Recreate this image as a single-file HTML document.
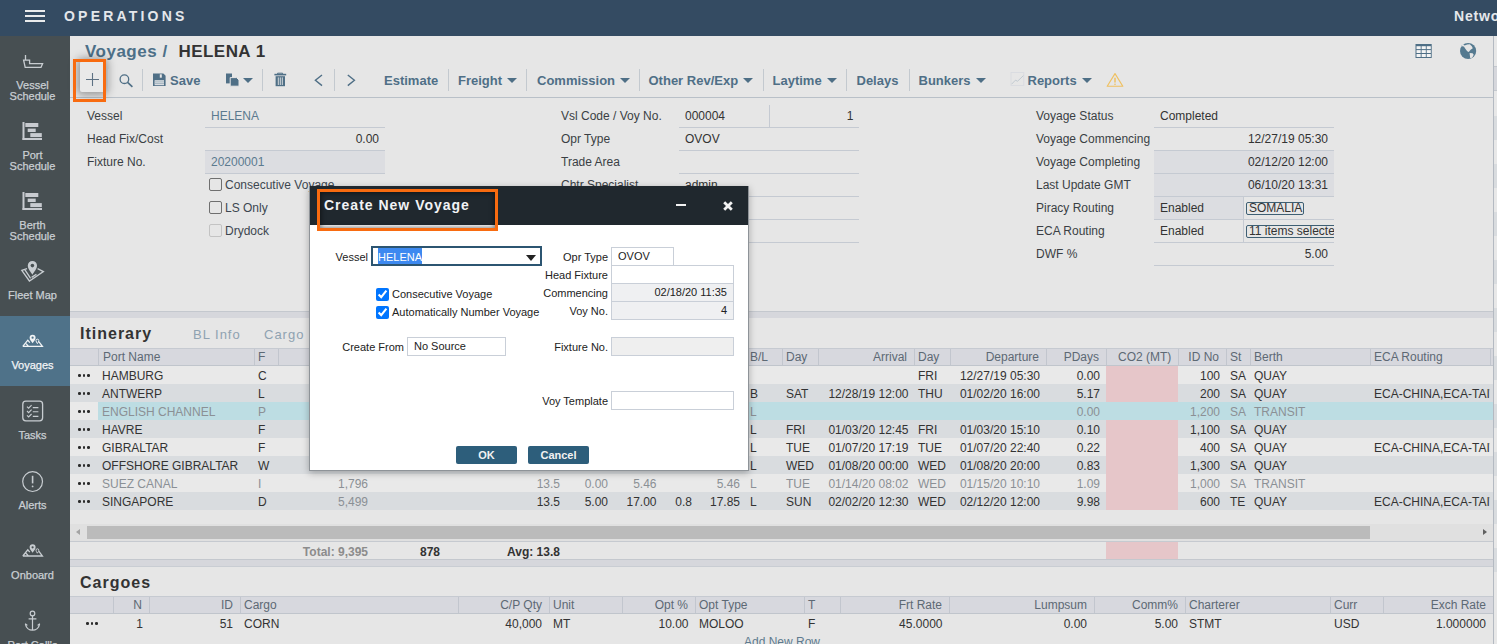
<!DOCTYPE html>
<html><head><meta charset="utf-8">
<style>
*{box-sizing:border-box;margin:0;padding:0}
html,body{width:1497px;height:644px;overflow:hidden;background:#e6e6e6;font-family:"Liberation Sans",sans-serif;color:#333}
.a{position:absolute}
.t{position:absolute;white-space:nowrap;font-size:12px;line-height:12px}
.b{font-weight:bold}
.r{text-align:right}
#top{left:0;top:0;width:1497px;height:36px;background:#344b62}
#side{left:0;top:36px;width:70px;height:608px;background:#474f52}
.sl{position:absolute;left:0;width:65px;-webkit-text-stroke:0.25px #c9ced2;text-align:center;font-size:11px;line-height:10px;color:#c9ced2;white-space:nowrap}
.tb{font-size:13px;font-weight:bold;color:#4f6f86;line-height:13px}
.sep{position:absolute;width:1px;background:#c3c9cf}
.arr{position:absolute;width:0;height:0;border-left:5px solid transparent;border-right:5px solid transparent;border-top:5px solid #4e6f86}
.fl{color:#3a3a3a}
.ln{position:absolute;height:1px;background:#c3c9d2}
</style></head><body>
<!-- top bar -->
<div id="top" class="a">
  <div class="a" style="left:25px;top:10px;width:20px;height:2px;background:#e9ebec"></div>
  <div class="a" style="left:25px;top:15px;width:20px;height:2px;background:#e9ebec"></div>
  <div class="a" style="left:25px;top:20px;width:20px;height:2px;background:#e9ebec"></div>
  <div class="t b" style="left:64px;top:9px;font-size:14px;line-height:14px;letter-spacing:3.2px;color:#e4e7eb">OPERATIONS</div>
  <div class="t b" style="left:1454px;top:9px;font-size:14px;line-height:14px;letter-spacing:0.8px;color:#e4e7eb">Network</div>
</div>
<!-- sidebar -->
<div id="side" class="a">
  <div class="a" style="left:0;top:280px;width:70px;height:70px;background:#4f7289"></div>
</div>
<div class="sl" style="top:80px">Vessel</div>
<div class="sl" style="top:90.5px">Schedule</div>
<div class="sl" style="top:150px">Port</div>
<div class="sl" style="top:160.5px">Schedule</div>
<div class="sl" style="top:220px">Berth</div>
<div class="sl" style="top:230.5px">Schedule</div>
<div class="sl" style="top:290px">Fleet Map</div>
<div class="sl" style="top:360px;color:#f2f4f6;-webkit-text-stroke:0.25px #f2f4f6">Voyages</div>
<div class="sl" style="top:430px">Tasks</div>
<div class="sl" style="top:500px">Alerts</div>
<div class="sl" style="top:570px">Onboard</div>
<div class="sl" style="top:640px">Port Call's</div>
<svg class="a" style="left:0;top:0" width="70" height="644" viewBox="0 0 70 644" fill="none" stroke="#c8cdd1" stroke-width="1.3">
  <!-- ship -->
  <path d="M25.5 55V60.2M23.6 60.2H29.6V63.6H42.6L41 67.4H25.2L23.6 60.2Z"/>
  <!-- gantt port -->
  <g fill="#c8cbd0" stroke="none">
    <rect x="22.5" y="122" width="2" height="18"/><rect x="22.5" y="138" width="19.5" height="2"/>
    <rect x="25.3" y="123" width="13" height="4"/><rect x="27.7" y="128.6" width="8" height="3.4"/><rect x="30.3" y="133.1" width="11.5" height="4"/>
    <rect x="22.5" y="192" width="2" height="18"/><rect x="22.5" y="208" width="19.5" height="2"/>
    <rect x="25.3" y="193" width="13" height="4"/><rect x="27.7" y="198.6" width="8" height="3.4"/><rect x="30.3" y="203.1" width="11.5" height="4"/>
  </g>
  <!-- fleet map -->
  <path d="M27 268.6L21.8 270.4L29.4 281L43.4 271.6L37.6 268.6M24.8 269.6L30.6 278.4M31.6 277.4L36.4 274.2" />
  <path d="M32.4 274.8C30.5 271.5 27.8 269.2 27.8 265.6A4.6 4.6 0 0 1 37 265.6C37 269.2 34.3 271.5 32.4 274.8Z" fill="#c8cdd1" stroke="none"/>
  <circle cx="32.4" cy="265.6" r="1.8" fill="#474f52" stroke="none"/>
  <!-- voyages -->
  <g stroke="#f0f3f5">
  <path d="M22.8 346.4H42.4L38.8 341.6M22.8 346.4L27.8 340.2L29.8 342.6M26 343.6L28.2 346"/>
  <path d="M32.6 343.2C31.2 341 29.6 339.7 29.6 337.7A3 3 0 0 1 35.6 337.7C35.6 339.7 34 341 32.6 343.2Z" fill="#f0f3f5" stroke="none"/><circle cx="32.6" cy="337.7" r="1.1" fill="#4f7289" stroke="none"/>
  <path d="M37.4 343.6C36.7 342.4 36 341.7 36 340.6A1.4 1.4 0 0 1 38.8 340.6C38.8 341.7 38.1 342.4 37.4 343.6Z" stroke-width="1"/>
  </g>
  <!-- tasks -->
  <rect x="22.8" y="401.2" width="19.8" height="19.6" rx="3"/>
  <path d="M27 406.6L28.6 408.2L31.6 405.2M27 411L28.6 412.6L31.6 409.6M27 415.4L28.6 417L31.6 414" stroke-width="1.1"/>
  <path d="M32.8 407.6H38.4M32.8 411.8H38.4M32.8 416.4H38.4" stroke-width="1.1"/>
  <!-- alerts -->
  <circle cx="32.6" cy="481.6" r="9.9" stroke-width="1.2"/>
  <path d="M32.6 475.8V483.4" stroke-width="1.6"/><circle cx="32.6" cy="486.4" r="0.9" fill="#c8cdd1" stroke="none"/>
  <!-- onboard -->
  <g transform="translate(0,209.6)">
  <path d="M22.8 346.4H42.4L38.8 341.6M22.8 346.4L27.8 340.2L29.8 342.6M26 343.6L28.2 346"/>
  <path d="M32.6 343.2C31.2 341 29.6 339.7 29.6 337.7A3 3 0 0 1 35.6 337.7C35.6 339.7 34 341 32.6 343.2Z" fill="#c8cdd1" stroke="none"/><circle cx="32.6" cy="337.7" r="1.1" fill="#474f52" stroke="none"/>
  <path d="M37.4 343.6C36.7 342.4 36 341.7 36 340.6A1.4 1.4 0 0 1 38.8 340.6C38.8 341.7 38.1 342.4 37.4 343.6Z" stroke-width="1"/>
  </g>
  <!-- anchor -->
  <circle cx="32.5" cy="613.5" r="2.3" stroke-width="1.2"/>
  <path d="M32.5 615.8V630.6M28.6 618.8H36.4M25.4 624.2A7.2 7.2 0 0 0 39.6 624.2M25.2 623.6L27.4 625.4M39.8 623.6L37.6 625.4" stroke-width="1.2"/>
</svg>
<!-- main right-edge panel -->
<div class="a" style="left:1493px;top:36px;width:1px;height:608px;background:#b4bac2"></div>
<div class="a" style="left:1494px;top:36px;width:3px;height:608px;background:#e8e8e8"></div>
<div class="a" style="left:1494px;top:66px;width:3px;height:25px;background:#d6d7dc;border-top:1px solid #c4c8ce;border-bottom:1px solid #c4c8ce"></div>
<div class="a" style="left:1494px;top:116px;width:3px;height:456px;background:repeating-linear-gradient(#d9dcdf 0 24px,#e8e8e8 24px 48px)"></div>

<!-- MAIN -->

<!-- title -->
<div class="t b" style="left:85px;top:43px;font-size:17px;line-height:17px;letter-spacing:0.5px;color:#4d7088">Voyages /</div>
<div class="t b" style="left:178.5px;top:43px;font-size:17px;line-height:17px;letter-spacing:0.45px;color:#333">HELENA 1</div>
<!-- top right icons -->
<svg class="a" style="left:1413px;top:41px" width="22" height="20" viewBox="1413 41 22 20">
  <rect x="1415.5" y="44" width="16.2" height="14" fill="#4f6f86"/>
  <g fill="#f4f4f4">
  <rect x="1416.5" y="46.2" width="4.2" height="2.9"/><rect x="1421.6" y="46.2" width="4.2" height="2.9"/><rect x="1426.7" y="46.2" width="4.1" height="2.9"/>
  <rect x="1416.5" y="50.1" width="4.2" height="2.9"/><rect x="1421.6" y="50.1" width="4.2" height="2.9"/><rect x="1426.7" y="50.1" width="4.1" height="2.9"/>
  <rect x="1416.5" y="54" width="4.2" height="3"/><rect x="1421.6" y="54" width="4.2" height="3"/><rect x="1426.7" y="54" width="4.1" height="3"/>
  </g>
</svg>
<svg class="a" style="left:1458px;top:41px" width="20" height="20" viewBox="1458 41 20 20">
  <circle cx="1468.1" cy="51" r="8.1" fill="#557a90"/>
  <path d="M1461.8 45.2L1463.4 44.6L1464.6 45.6L1467.2 44.6L1469.8 44.2L1471.8 46.2L1472.8 48.2L1470.6 49.8L1469.4 51.2L1468.6 52L1467.6 51.4L1466.4 50.2L1465 48.2L1463.9 46.6L1462.6 46.6Z" fill="#e6e6e6"/>
  <path d="M1469.6 53L1472.6 53.3L1473.7 54.8L1472.8 56.6L1471.2 58.6L1470.1 57.3L1469.8 54.8Z" fill="#e6e6e6"/>
</svg>
<!-- toolbar -->
<div class="a" style="left:70px;top:97px;width:1423px;height:1px;background:#b9c0c8"></div>
<div class="a" style="left:80px;top:61px;width:25px;height:31px;border-radius:2px;background:#e9e9e9;box-shadow:0 0 9px 3px rgba(0,0,0,0.34)"></div>
<svg class="a" style="left:70px;top:60px" width="1080" height="36" viewBox="70 60 1080 36" fill="none" stroke="#4f6f86">
  <!-- plus -->
  <path d="M92.5 73V86M86 79.5H99" stroke="#5d7183" stroke-width="1.1"/>
  <!-- search -->
  <circle cx="124.4" cy="79.2" r="4.3" stroke-width="1.3"/>
  <path d="M127.6 82.4L132.4 86.8" stroke-width="1.6"/>
  <!-- save icon -->
  <path d="M153 73.5H163.4L165.6 75.7V86H153Z" fill="#4f6f86" stroke="none"/>
  <rect x="159.8" y="74.3" width="2" height="3.4" fill="#e6e6e6" stroke="none"/>
  <rect x="154.6" y="80.2" width="9.4" height="5" fill="#dfe2e5" stroke="none"/>
  <path d="M154.6 81.9H164M154.6 83.6H164" stroke="#8aa0b0" stroke-width="0.7"/>
  <!-- copy icon -->
  <path d="M226 73.5H232V83.4H226Z" fill="#4f6f86" stroke="none"/>
  <path d="M230.2 77.6H236.6L239 80V86.2H230.2Z" fill="#4f6f86" stroke="#e6e6e6" stroke-width="1"/>
  <!-- trash -->
  <path d="M274.4 74.6H286.2" stroke-width="1.6"/>
  <path d="M277.6 74.2V73.2H282.6V74.2" stroke-width="1"/>
  <path d="M275.6 76.2H285V86.2H275.6Z" fill="#4f6f86" stroke="none"/>
  <path d="M278.3 77.4V85M280.3 77.4V85M282.3 77.4V85" stroke="#e6e6e6" stroke-width="0.9"/>
  <!-- prev / next -->
  <path d="M322 75L315.4 80.3L322 85.6" stroke-width="1.4"/>
  <path d="M347.8 75L354.4 80.3L347.8 85.6" stroke-width="1.4"/>
  <!-- chart icon -->
  <rect x="1011" y="72.5" width="12.8" height="13" stroke="#d9dbe0" stroke-width="0.9"/>
  <path d="M1011.6 84.2L1015.4 80.2L1017.6 81.2L1023.4 75.6" stroke="#b8c3cc" stroke-width="0.8"/>
  <!-- warning -->
  <path d="M1115 73.6L1122.8 86.2H1107.2Z" stroke="#efc060" stroke-width="1.15" stroke-linejoin="round"/>
  <path d="M1115 77.8V82.6" stroke="#efc060" stroke-width="1.5"/>
  <circle cx="1115" cy="84.3" r="0.8" fill="#efc060" stroke="none"/>
</svg>
<div class="sep" style="left:108px;top:69px;height:22px"></div>
<div class="sep" style="left:142px;top:69px;height:22px"></div>
<div class="sep" style="left:262px;top:69px;height:22px"></div>
<div class="sep" style="left:334px;top:69px;height:22px"></div>
<div class="sep" style="left:448px;top:69px;height:22px"></div>
<div class="sep" style="left:526px;top:69px;height:22px"></div>
<div class="sep" style="left:639px;top:69px;height:22px"></div>
<div class="sep" style="left:763px;top:69px;height:22px"></div>
<div class="sep" style="left:846px;top:69px;height:22px"></div>
<div class="sep" style="left:909px;top:69px;height:22px"></div>
<div class="arr" style="left:243px;top:78px"></div>
<div class="arr" style="left:507px;top:78px"></div>
<div class="arr" style="left:619.5px;top:78px"></div>
<div class="arr" style="left:743px;top:78px"></div>
<div class="arr" style="left:827px;top:78px"></div>
<div class="arr" style="left:975.5px;top:78px"></div>
<div class="arr" style="left:1081.5px;top:78px"></div>
<div class="t tb" style="left:170px;top:74px">Save</div>
<div class="t tb" style="left:384px;top:74px">Estimate</div>
<div class="t tb" style="left:458px;top:74px">Freight</div>
<div class="t tb" style="left:537px;top:74px">Commission</div>
<div class="t tb" style="left:648.5px;top:74px">Other Rev/Exp</div>
<div class="t tb" style="left:772.5px;top:74px">Laytime</div>
<div class="t tb" style="left:856.5px;top:74px">Delays</div>
<div class="t tb" style="left:918.5px;top:74px">Bunkers</div>
<div class="t tb" style="left:1027.5px;top:74px">Reports</div>
<!-- orange highlight on + -->
<div class="a" style="left:73px;top:59px;width:33px;height:43px;border:3px solid #f86b10"></div>





<!--GEN-->
<div class="t" style="left:87px;top:110px;color:#3a3f44">Vessel</div>
<div class="t" style="left:87px;top:133px;color:#3a3f44">Head Fix/Cost</div>
<div class="t" style="left:87px;top:156px;color:#3a3f44">Fixture No.</div>
<div class="a" style="left:205px;top:151px;width:180px;height:22px;background:#dcdde1"></div>
<div class="a" style="left:205px;top:127px;width:180px;height:1px;background:#c5cad2"></div>
<div class="a" style="left:205px;top:150px;width:180px;height:1px;background:#c5cad2"></div>
<div class="a" style="left:205px;top:173px;width:180px;height:1px;background:#c5cad2"></div>
<div class="t" style="left:211px;top:110px;color:#5b7a8f">HELENA</div>
<div class="t" style="left:79px;width:300px;text-align:right;top:133px;color:#333">0.00</div>
<div class="t" style="left:211px;top:156px;color:#5b7a8f">20200001</div>
<div class="a" style="left:209px;top:178px;width:13px;height:13px;border:1px solid #6f6f6f;border-radius:2px"></div>
<div class="t" style="left:225px;top:179px;color:#3d4650">Consecutive Voyage</div>
<div class="a" style="left:209px;top:201px;width:13px;height:13px;border:1px solid #6f6f6f;border-radius:2px"></div>
<div class="t" style="left:225px;top:202px;color:#3d4650">LS Only</div>
<div class="a" style="left:209px;top:224px;width:13px;height:13px;border:1px solid #c3c3c3;border-radius:2px"></div>
<div class="t" style="left:225px;top:225px;color:#3d4650">Drydock</div>
<div class="t" style="left:561px;top:110px;color:#3a3f44">Vsl Code / Voy No.</div>
<div class="t" style="left:561px;top:133px;color:#3a3f44">Opr Type</div>
<div class="t" style="left:561px;top:156px;color:#3a3f44">Trade Area</div>
<div class="t" style="left:561px;top:179px;color:#3a3f44">Chtr Specialist</div>
<div class="a" style="left:679px;top:127px;width:180px;height:1px;background:#c5cad2"></div>
<div class="a" style="left:679px;top:150px;width:180px;height:1px;background:#c5cad2"></div>
<div class="a" style="left:679px;top:173px;width:180px;height:1px;background:#c5cad2"></div>
<div class="a" style="left:679px;top:196px;width:180px;height:1px;background:#c5cad2"></div>
<div class="a" style="left:679px;top:219px;width:180px;height:1px;background:#c5cad2"></div>
<div class="a" style="left:679px;top:242px;width:180px;height:1px;background:#c5cad2"></div>
<div class="a" style="left:769px;top:105px;width:1px;height:22px;background:#c5cad2"></div>
<div class="t" style="left:685px;top:110px;color:#333">000004</div>
<div class="t" style="left:553.5px;width:300px;text-align:right;top:110px;color:#333">1</div>
<div class="t" style="left:685px;top:133px;color:#333">OVOV</div>
<div class="t" style="left:685px;top:179px;color:#333">admin</div>
<div class="t" style="left:1036px;top:110px;color:#3a3f44">Voyage Status</div>
<div class="t" style="left:1036px;top:133px;color:#3a3f44">Voyage Commencing</div>
<div class="t" style="left:1036px;top:156px;color:#3a3f44">Voyage Completing</div>
<div class="t" style="left:1036px;top:179px;color:#3a3f44">Last Update GMT</div>
<div class="t" style="left:1036px;top:202px;color:#3a3f44">Piracy Routing</div>
<div class="t" style="left:1036px;top:225px;color:#3a3f44">ECA Routing</div>
<div class="t" style="left:1036px;top:248px;color:#3a3f44">DWF %</div>
<div class="a" style="left:1154px;top:151px;width:180px;height:45px;background:#dcdde1"></div>
<div class="a" style="left:1154px;top:197px;width:89px;height:22px;background:#dcdde1"></div>
<div class="a" style="left:1154px;top:127px;width:180px;height:1px;background:#c5cad2"></div>
<div class="a" style="left:1154px;top:150px;width:180px;height:1px;background:#c5cad2"></div>
<div class="a" style="left:1154px;top:173px;width:180px;height:1px;background:#c5cad2"></div>
<div class="a" style="left:1154px;top:196px;width:180px;height:1px;background:#c5cad2"></div>
<div class="a" style="left:1154px;top:219px;width:180px;height:1px;background:#c5cad2"></div>
<div class="a" style="left:1154px;top:242px;width:180px;height:1px;background:#c5cad2"></div>
<div class="a" style="left:1154px;top:265px;width:180px;height:1px;background:#c5cad2"></div>
<div class="a" style="left:1243px;top:197px;width:1px;height:45px;background:#c5cad2"></div>
<div class="t" style="left:1160px;top:110px;color:#333">Completed</div>
<div class="t" style="left:1028px;width:300px;text-align:right;top:133px;color:#333">12/27/19 05:30</div>
<div class="t" style="left:1028px;width:300px;text-align:right;top:156px;color:#333">02/12/20 12:00</div>
<div class="t" style="left:1028px;width:300px;text-align:right;top:179px;color:#333">06/10/20 13:31</div>
<div class="t" style="left:1160px;top:202px;color:#333">Enabled</div>
<div class="t" style="left:1160px;top:225px;color:#333">Enabled</div>
<div class="t" style="left:1028px;width:300px;text-align:right;top:248px;color:#333">5.00</div>
<div class="a" style="left:1246px;top:202px;width:58px;height:13px;border:1px solid #3e5f73;border-radius:2px"></div>
<div class="t" style="left:1249px;top:202px;color:#333;line-height:12px">SOMALIA</div>
<div class="a" style="left:1246px;top:225px;width:88px;height:13px;overflow:hidden"><div class="a" style="left:0;top:0;width:100px;height:13px;border:1px solid #3e5f73;border-radius:2px"></div><div class="t" style="left:3px;top:0px;color:#333">11 items selected</div></div>
<div class="a" style="left:70px;top:311px;width:1423px;height:1px;background:#c4c8ce"></div>
<div class="a" style="left:70px;top:312px;width:1423px;height:6px;background:#d6d7dc"></div>
<div class="t" style="left:80px;top:326px;font-size:16px;line-height:16px;font-weight:bold;letter-spacing:1px;color:#333">Itinerary</div>
<div class="t" style="left:193px;top:328px;font-size:13px;line-height:13px;letter-spacing:1px;color:#8fa2b1">BL Info</div>
<div class="t" style="left:264px;top:328px;font-size:13px;line-height:13px;letter-spacing:1px;color:#8fa2b1">Cargo</div>
<div class="a" style="left:70px;top:348px;width:1423px;height:1px;background:#c6cad1"></div>
<div class="a" style="left:70px;top:349px;width:1423px;height:16px;background:#d7d8de"></div>
<div class="a" style="left:70px;top:365px;width:1423px;height:1px;background:#c0c5cc"></div>
<div class="a" style="left:98px;top:349px;width:1px;height:16px;background:#c2c6ce"></div>
<div class="a" style="left:254px;top:349px;width:1px;height:16px;background:#c2c6ce"></div>
<div class="a" style="left:278px;top:349px;width:1px;height:16px;background:#c2c6ce"></div>
<div class="a" style="left:782px;top:349px;width:1px;height:16px;background:#c2c6ce"></div>
<div class="a" style="left:818px;top:349px;width:1px;height:16px;background:#c2c6ce"></div>
<div class="a" style="left:914px;top:349px;width:1px;height:16px;background:#c2c6ce"></div>
<div class="a" style="left:950px;top:349px;width:1px;height:16px;background:#c2c6ce"></div>
<div class="a" style="left:1046px;top:349px;width:1px;height:16px;background:#c2c6ce"></div>
<div class="a" style="left:1106px;top:349px;width:1px;height:16px;background:#c2c6ce"></div>
<div class="a" style="left:1178px;top:349px;width:1px;height:16px;background:#c2c6ce"></div>
<div class="a" style="left:1226px;top:349px;width:1px;height:16px;background:#c2c6ce"></div>
<div class="a" style="left:1250px;top:349px;width:1px;height:16px;background:#c2c6ce"></div>
<div class="a" style="left:1370px;top:349px;width:1px;height:16px;background:#c2c6ce"></div>
<div class="a" style="left:1490px;top:349px;width:1px;height:16px;background:#c2c6ce"></div>
<div class="t" style="left:103px;top:351px;color:#5d6974">Port Name</div>
<div class="t" style="left:258px;top:351px;color:#5d6974">F</div>
<div class="t" style="left:750px;top:351px;color:#5d6974">B/L</div>
<div class="t" style="left:786px;top:351px;color:#5d6974">Day</div>
<div class="t" style="left:607px;width:300px;text-align:right;top:351px;color:#5d6974">Arrival</div>
<div class="t" style="left:918px;top:351px;color:#5d6974">Day</div>
<div class="t" style="left:739px;width:300px;text-align:right;top:351px;color:#5d6974">Departure</div>
<div class="t" style="left:799px;width:300px;text-align:right;top:351px;color:#5d6974">PDays</div>
<div class="t" style="left:1118px;top:351px;color:#5d6974">CO2 (MT)</div>
<div class="t" style="left:919px;width:300px;text-align:right;top:351px;color:#5d6974">ID No</div>
<div class="t" style="left:1230px;top:351px;color:#5d6974">St</div>
<div class="t" style="left:1254px;top:351px;color:#5d6974">Berth</div>
<div class="t" style="left:1374px;top:351px;color:#5d6974">ECA Routing</div>
<div class="a" style="left:70px;top:366px;width:1423px;height:18px;background:#e9e9e9"></div>
<div class="a" style="left:1106px;top:366px;width:72px;height:18px;background:#e6c6c9"></div>
<div class="a" style="left:78px;top:374px;width:2.6px;height:2.6px;background:#2b2b2b;border-radius:50%"></div>
<div class="a" style="left:82.5px;top:374px;width:2.6px;height:2.6px;background:#2b2b2b;border-radius:50%"></div>
<div class="a" style="left:87px;top:374px;width:2.6px;height:2.6px;background:#2b2b2b;border-radius:50%"></div>
<div class="t" style="left:102px;top:370px;color:#333">HAMBURG</div>
<div class="t" style="left:258px;top:370px;color:#333">C</div>
<div class="t" style="left:918px;top:370px;color:#333">FRI</div>
<div class="t" style="left:740px;width:300px;text-align:right;top:370px;color:#333">12/27/19 05:30</div>
<div class="t" style="left:800px;width:300px;text-align:right;top:370px;color:#333">0.00</div>
<div class="t" style="left:920px;width:300px;text-align:right;top:370px;color:#333">100</div>
<div class="t" style="left:1230px;top:370px;color:#333">SA</div>
<div class="t" style="left:1254px;top:370px;color:#333">QUAY</div>
<div class="a" style="left:70px;top:384px;width:1423px;height:18px;background:#d9dcdf"></div>
<div class="a" style="left:1106px;top:384px;width:72px;height:18px;background:#e6c6c9"></div>
<div class="a" style="left:78px;top:392px;width:2.6px;height:2.6px;background:#2b2b2b;border-radius:50%"></div>
<div class="a" style="left:82.5px;top:392px;width:2.6px;height:2.6px;background:#2b2b2b;border-radius:50%"></div>
<div class="a" style="left:87px;top:392px;width:2.6px;height:2.6px;background:#2b2b2b;border-radius:50%"></div>
<div class="t" style="left:102px;top:388px;color:#333">ANTWERP</div>
<div class="t" style="left:258px;top:388px;color:#333">L</div>
<div class="t" style="left:750px;top:388px;color:#333">B</div>
<div class="t" style="left:786px;top:388px;color:#333">SAT</div>
<div class="t" style="left:608.5px;width:300px;text-align:right;top:388px;color:#333">12/28/19 12:00</div>
<div class="t" style="left:918px;top:388px;color:#333">THU</div>
<div class="t" style="left:740px;width:300px;text-align:right;top:388px;color:#333">01/02/20 16:00</div>
<div class="t" style="left:800px;width:300px;text-align:right;top:388px;color:#333">5.17</div>
<div class="t" style="left:920px;width:300px;text-align:right;top:388px;color:#333">200</div>
<div class="t" style="left:1230px;top:388px;color:#333">SA</div>
<div class="t" style="left:1254px;top:388px;color:#333">QUAY</div>
<div class="a" style="left:1370px;top:384px;width:120px;height:18px;overflow:hidden"><div class="t" style="left:4px;top:4px;color:#333">ECA-CHINA,ECA-TAIWAN</div></div>
<div class="a" style="left:70px;top:402px;width:1423px;height:18px;background:#e9e9e9"></div>
<div class="a" style="left:98px;top:402px;width:1395px;height:18px;background:#bddde3"></div>
<div class="a" style="left:78px;top:410px;width:2.6px;height:2.6px;background:#2b2b2b;border-radius:50%"></div>
<div class="a" style="left:82.5px;top:410px;width:2.6px;height:2.6px;background:#2b2b2b;border-radius:50%"></div>
<div class="a" style="left:87px;top:410px;width:2.6px;height:2.6px;background:#2b2b2b;border-radius:50%"></div>
<div class="t" style="left:102px;top:406px;color:#8b9095">ENGLISH CHANNEL</div>
<div class="t" style="left:258px;top:406px;color:#8b9095">P</div>
<div class="t" style="left:750px;top:406px;color:#8b9095">L</div>
<div class="t" style="left:800px;width:300px;text-align:right;top:406px;color:#8b9095">0.00</div>
<div class="t" style="left:920px;width:300px;text-align:right;top:406px;color:#8b9095">1,200</div>
<div class="t" style="left:1230px;top:406px;color:#8b9095">SA</div>
<div class="t" style="left:1254px;top:406px;color:#8b9095">TRANSIT</div>
<div class="a" style="left:70px;top:420px;width:1423px;height:18px;background:#d9dcdf"></div>
<div class="a" style="left:1106px;top:420px;width:72px;height:18px;background:#e6c6c9"></div>
<div class="a" style="left:78px;top:428px;width:2.6px;height:2.6px;background:#2b2b2b;border-radius:50%"></div>
<div class="a" style="left:82.5px;top:428px;width:2.6px;height:2.6px;background:#2b2b2b;border-radius:50%"></div>
<div class="a" style="left:87px;top:428px;width:2.6px;height:2.6px;background:#2b2b2b;border-radius:50%"></div>
<div class="t" style="left:102px;top:424px;color:#333">HAVRE</div>
<div class="t" style="left:258px;top:424px;color:#333">F</div>
<div class="t" style="left:750px;top:424px;color:#333">L</div>
<div class="t" style="left:786px;top:424px;color:#333">FRI</div>
<div class="t" style="left:608.5px;width:300px;text-align:right;top:424px;color:#333">01/03/20 12:45</div>
<div class="t" style="left:918px;top:424px;color:#333">FRI</div>
<div class="t" style="left:740px;width:300px;text-align:right;top:424px;color:#333">01/03/20 15:10</div>
<div class="t" style="left:800px;width:300px;text-align:right;top:424px;color:#333">0.10</div>
<div class="t" style="left:920px;width:300px;text-align:right;top:424px;color:#333">1,100</div>
<div class="t" style="left:1230px;top:424px;color:#333">SA</div>
<div class="t" style="left:1254px;top:424px;color:#333">QUAY</div>
<div class="a" style="left:70px;top:438px;width:1423px;height:18px;background:#e9e9e9"></div>
<div class="a" style="left:1106px;top:438px;width:72px;height:18px;background:#e6c6c9"></div>
<div class="a" style="left:78px;top:446px;width:2.6px;height:2.6px;background:#2b2b2b;border-radius:50%"></div>
<div class="a" style="left:82.5px;top:446px;width:2.6px;height:2.6px;background:#2b2b2b;border-radius:50%"></div>
<div class="a" style="left:87px;top:446px;width:2.6px;height:2.6px;background:#2b2b2b;border-radius:50%"></div>
<div class="t" style="left:102px;top:442px;color:#333">GIBRALTAR</div>
<div class="t" style="left:258px;top:442px;color:#333">F</div>
<div class="t" style="left:750px;top:442px;color:#333">L</div>
<div class="t" style="left:786px;top:442px;color:#333">TUE</div>
<div class="t" style="left:608.5px;width:300px;text-align:right;top:442px;color:#333">01/07/20 17:19</div>
<div class="t" style="left:918px;top:442px;color:#333">TUE</div>
<div class="t" style="left:740px;width:300px;text-align:right;top:442px;color:#333">01/07/20 22:40</div>
<div class="t" style="left:800px;width:300px;text-align:right;top:442px;color:#333">0.22</div>
<div class="t" style="left:920px;width:300px;text-align:right;top:442px;color:#333">400</div>
<div class="t" style="left:1230px;top:442px;color:#333">SA</div>
<div class="t" style="left:1254px;top:442px;color:#333">QUAY</div>
<div class="a" style="left:1370px;top:438px;width:120px;height:18px;overflow:hidden"><div class="t" style="left:4px;top:4px;color:#333">ECA-CHINA,ECA-TAIWAN</div></div>
<div class="a" style="left:70px;top:456px;width:1423px;height:18px;background:#d9dcdf"></div>
<div class="a" style="left:1106px;top:456px;width:72px;height:18px;background:#e6c6c9"></div>
<div class="a" style="left:78px;top:464px;width:2.6px;height:2.6px;background:#2b2b2b;border-radius:50%"></div>
<div class="a" style="left:82.5px;top:464px;width:2.6px;height:2.6px;background:#2b2b2b;border-radius:50%"></div>
<div class="a" style="left:87px;top:464px;width:2.6px;height:2.6px;background:#2b2b2b;border-radius:50%"></div>
<div class="t" style="left:102px;top:460px;color:#333">OFFSHORE GIBRALTAR</div>
<div class="t" style="left:258px;top:460px;color:#333">W</div>
<div class="t" style="left:750px;top:460px;color:#333">L</div>
<div class="t" style="left:786px;top:460px;color:#333">WED</div>
<div class="t" style="left:608.5px;width:300px;text-align:right;top:460px;color:#333">01/08/20 00:00</div>
<div class="t" style="left:918px;top:460px;color:#333">WED</div>
<div class="t" style="left:740px;width:300px;text-align:right;top:460px;color:#333">01/08/20 20:00</div>
<div class="t" style="left:800px;width:300px;text-align:right;top:460px;color:#333">0.83</div>
<div class="t" style="left:920px;width:300px;text-align:right;top:460px;color:#333">1,300</div>
<div class="t" style="left:1230px;top:460px;color:#333">SA</div>
<div class="t" style="left:1254px;top:460px;color:#333">QUAY</div>
<div class="a" style="left:70px;top:474px;width:1423px;height:18px;background:#e9e9e9"></div>
<div class="a" style="left:1106px;top:474px;width:72px;height:18px;background:#e6c6c9"></div>
<div class="a" style="left:78px;top:482px;width:2.6px;height:2.6px;background:#2b2b2b;border-radius:50%"></div>
<div class="a" style="left:82.5px;top:482px;width:2.6px;height:2.6px;background:#2b2b2b;border-radius:50%"></div>
<div class="a" style="left:87px;top:482px;width:2.6px;height:2.6px;background:#2b2b2b;border-radius:50%"></div>
<div class="t" style="left:102px;top:478px;color:#8b9095">SUEZ CANAL</div>
<div class="t" style="left:258px;top:478px;color:#8b9095">I</div>
<div class="t" style="left:68px;width:300px;text-align:right;top:478px;color:#8b9095">1,796</div>
<div class="t" style="left:260px;width:300px;text-align:right;top:478px;color:#8b9095">13.5</div>
<div class="t" style="left:308px;width:300px;text-align:right;top:478px;color:#8b9095">0.00</div>
<div class="t" style="left:356.5px;width:300px;text-align:right;top:478px;color:#8b9095">5.46</div>
<div class="t" style="left:440px;width:300px;text-align:right;top:478px;color:#8b9095">5.46</div>
<div class="t" style="left:750px;top:478px;color:#8b9095">L</div>
<div class="t" style="left:786px;top:478px;color:#8b9095">TUE</div>
<div class="t" style="left:608.5px;width:300px;text-align:right;top:478px;color:#8b9095">01/14/20 08:02</div>
<div class="t" style="left:918px;top:478px;color:#8b9095">WED</div>
<div class="t" style="left:740px;width:300px;text-align:right;top:478px;color:#8b9095">01/15/20 10:10</div>
<div class="t" style="left:800px;width:300px;text-align:right;top:478px;color:#8b9095">1.09</div>
<div class="t" style="left:920px;width:300px;text-align:right;top:478px;color:#8b9095">1,000</div>
<div class="t" style="left:1230px;top:478px;color:#8b9095">SA</div>
<div class="t" style="left:1254px;top:478px;color:#8b9095">TRANSIT</div>
<div class="a" style="left:70px;top:492px;width:1423px;height:18px;background:#d9dcdf"></div>
<div class="a" style="left:1106px;top:492px;width:72px;height:18px;background:#e6c6c9"></div>
<div class="a" style="left:78px;top:500px;width:2.6px;height:2.6px;background:#2b2b2b;border-radius:50%"></div>
<div class="a" style="left:82.5px;top:500px;width:2.6px;height:2.6px;background:#2b2b2b;border-radius:50%"></div>
<div class="a" style="left:87px;top:500px;width:2.6px;height:2.6px;background:#2b2b2b;border-radius:50%"></div>
<div class="t" style="left:102px;top:496px;color:#333">SINGAPORE</div>
<div class="t" style="left:258px;top:496px;color:#333">D</div>
<div class="t" style="left:68px;width:300px;text-align:right;top:496px;color:#8b9095">5,499</div>
<div class="t" style="left:260px;width:300px;text-align:right;top:496px;color:#333">13.5</div>
<div class="t" style="left:308px;width:300px;text-align:right;top:496px;color:#333">5.00</div>
<div class="t" style="left:356.5px;width:300px;text-align:right;top:496px;color:#333">17.00</div>
<div class="t" style="left:392px;width:300px;text-align:right;top:496px;color:#333">0.8</div>
<div class="t" style="left:440px;width:300px;text-align:right;top:496px;color:#333">17.85</div>
<div class="t" style="left:750px;top:496px;color:#333">L</div>
<div class="t" style="left:786px;top:496px;color:#333">SUN</div>
<div class="t" style="left:608.5px;width:300px;text-align:right;top:496px;color:#333">02/02/20 12:30</div>
<div class="t" style="left:918px;top:496px;color:#333">WED</div>
<div class="t" style="left:740px;width:300px;text-align:right;top:496px;color:#333">02/12/20 12:00</div>
<div class="t" style="left:800px;width:300px;text-align:right;top:496px;color:#333">9.98</div>
<div class="t" style="left:920px;width:300px;text-align:right;top:496px;color:#333">600</div>
<div class="t" style="left:1230px;top:496px;color:#333">TE</div>
<div class="t" style="left:1254px;top:496px;color:#333">QUAY</div>
<div class="a" style="left:1370px;top:492px;width:120px;height:18px;overflow:hidden"><div class="t" style="left:4px;top:4px;color:#333">ECA-CHINA,ECA-TAIWAN</div></div>
<div class="a" style="left:70px;top:524px;width:1423px;height:17px;background:#e0e0e0"></div>
<div class="a" style="left:87px;top:526px;width:1283px;height:13px;background:#bbbbbb"></div>
<div class="a" style="left:76px;top:529px;width:0;height:0;border-top:3.5px solid transparent;border-bottom:3.5px solid transparent;border-right:4px solid #a3a3a3"></div>
<div class="a" style="left:1483px;top:529px;width:0;height:0;border-top:3.7px solid transparent;border-bottom:3.7px solid transparent;border-left:4.4px solid #606060"></div>
<div class="a" style="left:70px;top:541px;width:1423px;height:1px;background:#c6cad0"></div>
<div class="a" style="left:1106px;top:542px;width:72px;height:17px;background:#e6c6c9"></div>
<div class="t" style="left:68px;width:300px;text-align:right;top:546px;color:#8c8c8c;font-weight:bold">Total: 9,395</div>
<div class="t" style="left:420px;top:546px;color:#333;font-weight:bold">878</div>
<div class="t" style="left:507px;top:546px;color:#333;font-weight:bold">Avg: 13.8</div>
<div class="a" style="left:70px;top:559px;width:1423px;height:1px;background:#c4c8ce"></div>
<div class="a" style="left:70px;top:560px;width:1423px;height:6px;background:#d6d7dc"></div>
<div class="a" style="left:70px;top:566px;width:1423px;height:1px;background:#c9cdd3"></div>
<div class="t" style="left:80px;top:575px;font-size:16px;line-height:16px;font-weight:bold;letter-spacing:1px;color:#333">Cargoes</div>
<div class="a" style="left:70px;top:596px;width:1423px;height:1px;background:#c6cad1"></div>
<div class="a" style="left:70px;top:597px;width:1423px;height:16px;background:#d7d8de"></div>
<div class="a" style="left:70px;top:613px;width:1423px;height:1px;background:#c0c5cc"></div>
<div class="a" style="left:113px;top:597px;width:1px;height:16px;background:#c2c6ce"></div>
<div class="a" style="left:149px;top:597px;width:1px;height:16px;background:#c2c6ce"></div>
<div class="a" style="left:240px;top:597px;width:1px;height:16px;background:#c2c6ce"></div>
<div class="a" style="left:458px;top:597px;width:1px;height:16px;background:#c2c6ce"></div>
<div class="a" style="left:549px;top:597px;width:1px;height:16px;background:#c2c6ce"></div>
<div class="a" style="left:622px;top:597px;width:1px;height:16px;background:#c2c6ce"></div>
<div class="a" style="left:695px;top:597px;width:1px;height:16px;background:#c2c6ce"></div>
<div class="a" style="left:804px;top:597px;width:1px;height:16px;background:#c2c6ce"></div>
<div class="a" style="left:840px;top:597px;width:1px;height:16px;background:#c2c6ce"></div>
<div class="a" style="left:949px;top:597px;width:1px;height:16px;background:#c2c6ce"></div>
<div class="a" style="left:1094px;top:597px;width:1px;height:16px;background:#c2c6ce"></div>
<div class="a" style="left:1185px;top:597px;width:1px;height:16px;background:#c2c6ce"></div>
<div class="a" style="left:1330px;top:597px;width:1px;height:16px;background:#c2c6ce"></div>
<div class="a" style="left:1383px;top:597px;width:1px;height:16px;background:#c2c6ce"></div>
<div class="t" style="left:-158px;width:300px;text-align:right;top:599px;color:#5d6974">N</div>
<div class="t" style="left:-67px;width:300px;text-align:right;top:599px;color:#5d6974">ID</div>
<div class="t" style="left:244px;top:599px;color:#5d6974">Cargo</div>
<div class="t" style="left:242px;width:300px;text-align:right;top:599px;color:#5d6974">C/P Qty</div>
<div class="t" style="left:553px;top:599px;color:#5d6974">Unit</div>
<div class="t" style="left:388px;width:300px;text-align:right;top:599px;color:#5d6974">Opt %</div>
<div class="t" style="left:699px;top:599px;color:#5d6974">Opt Type</div>
<div class="t" style="left:808px;top:599px;color:#5d6974">T</div>
<div class="t" style="left:642px;width:300px;text-align:right;top:599px;color:#5d6974">Frt Rate</div>
<div class="t" style="left:787px;width:300px;text-align:right;top:599px;color:#5d6974">Lumpsum</div>
<div class="t" style="left:878px;width:300px;text-align:right;top:599px;color:#5d6974">Comm%</div>
<div class="t" style="left:1189px;top:599px;color:#5d6974">Charterer</div>
<div class="t" style="left:1334px;top:599px;color:#5d6974">Curr</div>
<div class="t" style="left:1186px;width:300px;text-align:right;top:599px;color:#5d6974">Exch Rate</div>
<div class="a" style="left:86px;top:622px;width:2.6px;height:2.6px;background:#2b2b2b;border-radius:50%"></div>
<div class="a" style="left:90.5px;top:622px;width:2.6px;height:2.6px;background:#2b2b2b;border-radius:50%"></div>
<div class="a" style="left:95px;top:622px;width:2.6px;height:2.6px;background:#2b2b2b;border-radius:50%"></div>
<div class="t" style="left:-157px;width:300px;text-align:right;top:618px;color:#333">1</div>
<div class="t" style="left:-67px;width:300px;text-align:right;top:618px;color:#333">51</div>
<div class="t" style="left:244px;top:618px;color:#333">CORN</div>
<div class="t" style="left:242px;width:300px;text-align:right;top:618px;color:#333">40,000</div>
<div class="t" style="left:553px;top:618px;color:#333">MT</div>
<div class="t" style="left:388.5px;width:300px;text-align:right;top:618px;color:#333">10.00</div>
<div class="t" style="left:699px;top:618px;color:#333">MOLOO</div>
<div class="t" style="left:808px;top:618px;color:#333">F</div>
<div class="t" style="left:642.5px;width:300px;text-align:right;top:618px;color:#333">45.0000</div>
<div class="t" style="left:787px;width:300px;text-align:right;top:618px;color:#333">0.00</div>
<div class="t" style="left:878px;width:300px;text-align:right;top:618px;color:#333">5.00</div>
<div class="t" style="left:1189px;top:618px;color:#333">STMT</div>
<div class="t" style="left:1334px;top:618px;color:#333">USD</div>
<div class="t" style="left:1186px;width:300px;text-align:right;top:618px;color:#333">1.000000</div>
<div class="t" style="left:744px;top:636px;color:#5d7a8e">Add New Row</div>
<div class="a" style="left:309px;top:186px;width:440px;height:285px;background:#fff;border:1px solid #8e9398;box-shadow:0 2px 7px rgba(0,0,0,0.28)"></div>
<div class="a" style="left:310px;top:186px;width:438px;height:39px;background:#20282e"></div>
<div class="a" style="left:317px;top:189px;width:181px;height:42px;border:3px solid #f86b10;box-shadow:inset 0 0 5px 1px rgba(0,0,0,0.5)"></div>
<div class="t" style="left:324px;top:198px;font-size:14px;line-height:14px;font-weight:bold;letter-spacing:1.0px;color:#f1f3f5">Create New Voyage</div>
<div class="a" style="left:676px;top:204px;width:9.5px;height:2.2px;background:#f2f2f2"></div>
<svg class="a" style="left:720px;top:198px" width="16" height="16" viewBox="0 0 16 16"><path d="M4.2 4.2L11.8 11.8M11.8 4.2L4.2 11.8" stroke="#f2f2f2" stroke-width="2.8"/></svg>
<div class="t" style="left:68px;width:300px;text-align:right;top:252px;font-size:11px;line-height:11px;color:#222">Vessel</div>
<div class="a" style="left:371px;top:246px;width:171px;height:20px;border:2px solid #2c5571;background:#fff"></div>
<div class="a" style="left:378px;top:248px;width:44px;height:16px;background:#3d89f0"></div>
<div class="t" style="left:378px;top:252px;font-size:11px;line-height:11px;color:#fff">HELENA</div>
<div class="a" style="left:526px;top:255px;width:0;height:0;border-left:5.2px solid transparent;border-right:5.2px solid transparent;border-top:6px solid #222"></div>
<div class="t" style="left:308px;width:300px;text-align:right;top:252px;font-size:11px;line-height:11px;color:#222">Opr Type</div>
<div class="a" style="left:611px;top:247px;width:63px;height:19px;border:1px solid #c9cfd8"></div>
<div class="t" style="left:618px;top:251px;font-size:11px;line-height:11px;color:#222">OVOV</div>
<div class="t" style="left:308px;width:300px;text-align:right;top:270px;font-size:11px;line-height:11px;color:#222">Head Fixture</div>
<div class="a" style="left:611px;top:265px;width:123px;height:19px;border:1px solid #c9cfd8"></div>
<div class="t" style="left:308px;width:300px;text-align:right;top:288px;font-size:11px;line-height:11px;color:#222">Commencing</div>
<div class="a" style="left:611px;top:283px;width:123px;height:19px;border:1px solid #c9cfd8;background:#eff0f2"></div>
<div class="t" style="left:427px;width:300px;text-align:right;top:287px;font-size:11px;line-height:11px;color:#222">02/18/20 11:35</div>
<div class="t" style="left:308px;width:300px;text-align:right;top:306px;font-size:11px;line-height:11px;color:#222">Voy No.</div>
<div class="a" style="left:611px;top:301px;width:123px;height:19px;border:1px solid #c9cfd8;background:#eff0f2"></div>
<div class="t" style="left:427px;width:300px;text-align:right;top:305px;font-size:11px;line-height:11px;color:#222">4</div>
<input type="checkbox" checked class="a" style="left:376px;top:288px;width:13px;height:13px;margin:0">
<input type="checkbox" checked class="a" style="left:376px;top:306px;width:13px;height:13px;margin:0">
<div class="t" style="left:392px;top:289px;font-size:11px;line-height:11px;color:#222">Consecutive Voyage</div>
<div class="t" style="left:392px;top:307px;font-size:11px;line-height:11px;color:#222">Automatically Number Voyage</div>
<div class="t" style="left:104px;width:300px;text-align:right;top:342px;font-size:11px;line-height:11px;color:#222">Create From</div>
<div class="a" style="left:407px;top:337px;width:99px;height:19px;border:1px solid #c9cfd8"></div>
<div class="t" style="left:414px;top:341px;font-size:11px;line-height:11px;color:#222">No Source</div>
<div class="t" style="left:308px;width:300px;text-align:right;top:342px;font-size:11px;line-height:11px;color:#222">Fixture No.</div>
<div class="a" style="left:611px;top:337px;width:123px;height:19px;border:1px solid #c9cfd8;background:#efefef"></div>
<div class="t" style="left:308px;width:300px;text-align:right;top:396px;font-size:11px;line-height:11px;color:#222">Voy Template</div>
<div class="a" style="left:611px;top:391px;width:123px;height:19px;border:1px solid #c9cfd8"></div>
<div class="a" style="left:456px;top:446px;width:61px;height:18px;background:#2d5e7b;border-radius:2px"></div>
<div class="a" style="left:528px;top:446px;width:61px;height:18px;background:#2d5e7b;border-radius:2px"></div>
<div class="t" style="left:456px;width:61px;text-align:center;top:450px;font-size:11px;line-height:11px;font-weight:bold;color:#f2f2f2">OK</div>
<div class="t" style="left:528px;width:61px;text-align:center;top:450px;font-size:11px;line-height:11px;font-weight:bold;color:#f2f2f2">Cancel</div>
<!--/GEN-->
<div id="main"></div>
</body></html>
